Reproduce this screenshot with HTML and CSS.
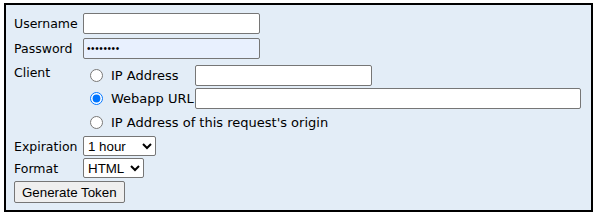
FILE: index.html
```html
<!DOCTYPE html>
<html>
<head>
<meta charset="utf-8">
<link rel="stylesheet" href="styles.css">
</head>
<body>
<form class="panel">
  <div class="row r-user">
    <label class="lbl">Username</label>
    <input class="txt" type="text">
  </div>
  <div class="row r-pass">
    <label class="lbl">Password</label>
    <input class="txt pw" type="password" value="password">
  </div>
  <div class="row client">
    <label class="lbl lbl-top">Client</label>
    <div class="choices">
      <label class="opt"><input type="radio" name="c"><span>IP Address</span></label>
      <input class="txt ip" type="text">
      <label class="opt"><input type="radio" name="c" checked><span>Webapp URL</span></label>
      <input class="txt url" type="text">
      <label class="opt wide"><input type="radio" name="c"><span>IP Address of this request's origin</span></label>
    </div>
  </div>
  <div class="row r-exp">
    <label class="lbl">Expiration</label>
    <select class="sel exp"><option>1 hour</option></select>
  </div>
  <div class="row r-fmt">
    <label class="lbl">Format</label>
    <select class="sel fmt"><option>HTML</option></select>
  </div>
  <div class="row r-btn">
    <button type="button" class="btn">Generate Token</button>
  </div>
</form>
</body>
</html>
```
FILE: styles.css
```css
html, body { margin: 0; padding: 0; background: #fff; }
body { padding: 3px 0 0 4px; }
.panel {
  width: 589px;
  height: 209px;
  border: 2px solid #000;
  background: #e3edf7;
  font-family: "DejaVu Sans", Verdana, sans-serif;
  font-size: 12.5px;
  color: #000;
  padding: 6px 0 0 8px;
  box-sizing: border-box;
  display: flex;
  flex-direction: column;
}
.row { display: flex; align-items: center; flex: none; }
.r-user { height: 24px; }
.r-pass { height: 26px; }
.r-exp { height: 18px; }
.r-fmt { height: 26px; }
.r-btn { height: 22px; }
.client { align-items: flex-start; }
.lbl { width: 69px; flex: none; }
.lbl-top { margin-top: 4px; }
.txt {
  box-sizing: border-box;
  height: 21px;
  border: 1px solid #767676;
  border-radius: 2px;
  background: #fff;
  margin: 0;
  padding: 1px 2px;
  font: 13.33px "Liberation Sans", Arial, sans-serif;
}
.row > .txt { width: 177px; }
.pw { background: #e8f0fe; font-size: 10px; letter-spacing: 0.6px; padding-left: 3px; }
.choices {
  display: grid;
  grid-template-columns: auto auto;
  grid-template-rows: 28px 18px 30px;
  justify-content: start;
  align-items: center;
  column-gap: 1px;
  padding-left: 4px;
  font-size: 13px;
}
.opt { display: flex; align-items: center; }
.opt input { margin: 0 8px 0 3px; width: 13px; height: 13px; accent-color: #0075ff; }
.wide { grid-column: 1 / 3; }
.ip { width: 177px; }
.url { width: 386px; }
.sel {
  height: 20px;
  box-sizing: border-box;
  border: 1px solid #767676;
  border-radius: 2px;
  background: #fff;
  font: 13.33px "Liberation Sans", Arial, sans-serif;
  color: #000;
  padding: 0;
}
.exp { width: 73px; }
.fmt { width: 61px; }
.btn {
  height: 22px;
  box-sizing: border-box;
  padding: 1px 7px;
  border: 1px solid #767676;
  border-radius: 2px;
  background: #efefef;
  font: 13.33px "Liberation Sans", Arial, sans-serif;
  color: #000;
}
```
